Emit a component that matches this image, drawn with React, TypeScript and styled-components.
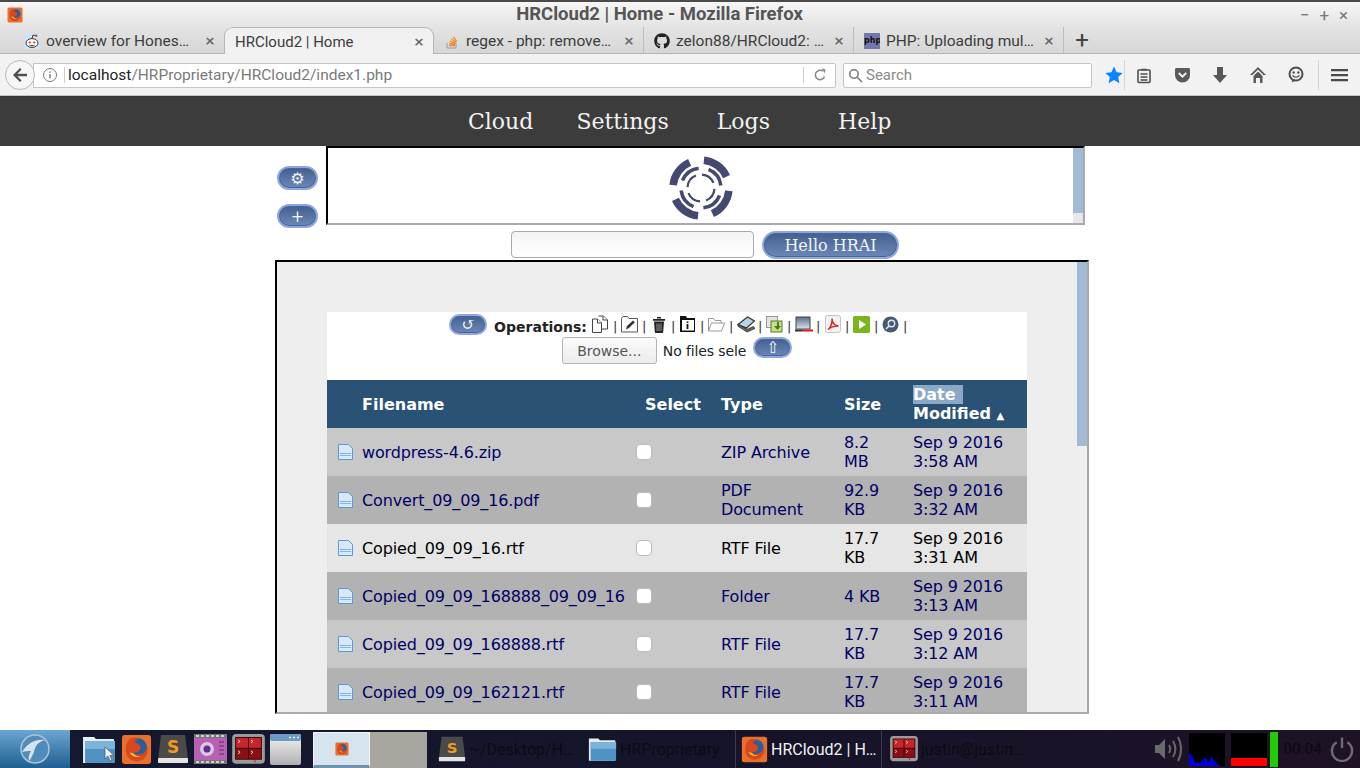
import React from "react";
import styled, { createGlobalStyle } from "styled-components";
import { FaGithub } from "react-icons/fa";

const Global = createGlobalStyle`
  html, body { margin: 0; padding: 0; background: #fff; overflow: hidden; }
  * { box-sizing: border-box; }
`;

const UI = `"Roboto", "Noto Sans", sans-serif`;
const BODY = `"DejaVu Sans", sans-serif`;
const SERIF = `"DejaVu Serif", "DejaVu Sans", serif`;

const Page = styled.div`
  width: 1360px; height: 768px; display: flex; flex-direction: column; overflow: hidden; background: #fff;
`;
const TitleBar = styled.div`
  height: 27px; flex: none; display: flex; align-items: center; padding: 0 12px 0 7px;
  border-top: 2px solid #4a4a4a;
  background: linear-gradient(#f6f6f6, #e4e4e4);
`;
const TitleText = styled.div`
  flex: 1; text-align: center; font: 700 18.5px ${UI}; color: #555; padding-right: 4px;
  position: relative; top: -1px;
`;
const WinControls = styled.div`
  display: flex; gap: 8px; color: #777; font: 400 17px/20px ${UI}; width: 48px; justify-content: space-between;
`;
const TabBar = styled.div`
  height: 27px; flex: none; display: flex; padding-left: 14px;
  background: linear-gradient(#e3e3e3, #d6d6d6);
  border-bottom: 1px solid #b5b5b5;
`;
const Tab = styled.div<{ $active?: boolean; $sep?: boolean }>`
  width: 210px; height: ${p => (p.$active ? "27px" : "26px")}; display: flex; align-items: center; padding: 1px 7px 0 10px; gap: 6px;
  font: 400 ${p => (p.$active ? 15 : 15.5)}px ${UI}; color: #3c3c3c; position: relative;
  ${p => p.$active && `background: linear-gradient(#f0f0f0, #f2f2f2); border: 1px solid #b8b8b8; border-bottom: none; border-radius: 9px 9px 0 0; z-index: 1;`}
  ${p => p.$sep && `border-right: 1px solid #bdbdbd;`}
`;
const TabLabel = styled.span`
  flex: 1; white-space: nowrap;
`;
const TabClose = styled.span`
  color: #666; font: 700 13px ${BODY}; width: 14px; text-align: center;
`;
const NewTab = styled.div`
  width: 36px; text-align: center; font: 400 24px/26px ${UI}; color: #444;
`;
const PhpIcon = styled.span`
  width: 16px; height: 16px; background: #7377ad; color: #111; font: 700 8px/16px ${BODY}; text-align: center; overflow: hidden; flex: none;
`;
const Toolbar = styled.div`
  height: 42px; flex: none; display: flex; align-items: center; padding: 1px 0 0 5px;
  background: #f2f2f2; border-bottom: 1px solid #c4c4c4; position: relative;
`;
const BackButton = styled.div`
  width: 30px; height: 30px; border-radius: 50%; background: #f6f6f6; border: 1px solid #b9b9b9; z-index: 1;
  display: flex; align-items: center; justify-content: center; flex: none;
`;
const UrlBar = styled.div`
  width: 803px; height: 25px; margin-left: -2px; background: #fff; border: 1px solid #c5c5c5; border-radius: 0 2px 2px 0;
  display: flex; align-items: center; padding-left: 8px; font: 400 15.5px ${UI}; color: #7a7a7a;
`;
const UrlSep = styled.span`
  width: 1px; height: 16px; background: #ccc; margin: 0 3px 0 6px;
`;
const UrlHost = styled.span` color: #222; `;
const UrlPath = styled.span` flex: 1; `;
const ReloadBox = styled.div`
  width: 32px; height: 16px; border-left: 1px solid #ccc; display: flex; align-items: center; justify-content: center;
`;
const SearchBox = styled.div`
  width: 249px; height: 25px; margin-left: 7px; background: #fff; border: 1px solid #c5c5c5; border-radius: 2px;
  display: flex; align-items: center; gap: 3px; padding-left: 4px; font: 400 15px ${UI}; color: #8a8a8a;
`;
const ToolIcons = styled.div`
  display: flex; align-items: center; margin-left: 11px; flex: 1;
`;
const ToolSlot = styled.div<{ $w: number; $sep?: boolean }>`
  width: ${p => p.$w}px; height: 30px; display: flex; align-items: center; justify-content: center;
  ${p => p.$sep && `border-right: 1px solid #d5d5d5;`}
`;
const SiteNav = styled.nav`
  height: 50px; flex: none; background: #3c3c3c; display: flex; align-items: center; padding: 0 0 0 468px;
  border-top: 1px solid #333;
`;
const NavItem = styled.a<{ $ml?: number }>`
  font: 400 22px ${SERIF}; color: #f2f2f2; margin-left: ${p => p.$ml ?? 0}px; white-space: nowrap;
`;
const Main = styled.main`
  flex: 1; min-height: 0; overflow: hidden; display: flex; flex-direction: column; background: #fff;
`;
const TopRow = styled.div`
  display: flex; align-items: flex-start; padding-left: 277px; gap: 8px; height: 85px; flex: none;
`;
const SideButtons = styled.div`
  width: 41px; padding-top: 20px; display: flex; flex-direction: column; gap: 14px;
`;
const Pill = styled.button<{ $w?: number; $h?: number }>`
  width: ${p => p.$w ?? 41}px; height: ${p => p.$h ?? 24}px; padding: 0; border-radius: 14px;
  border: 2px solid #8ea6e6; background: linear-gradient(#42608f, #6c88b6); color: #f4f4f4;
  font: 400 16px ${SERIF}; display: flex; align-items: center; justify-content: center; flex: none;
  box-shadow: inset 0 0 0 1px #4a6590;
`;
const LogoBox = styled.div`
  width: 759px; height: 79px; display: flex; border: 2px solid #aaa; border-top-color: #000; border-left-color: #000;
`;
const LogoArea = styled.div`
  flex: 1; display: flex; align-items: center; justify-content: center; background: #fff; padding-top: 5px;
`;
const ScrollTrack = styled.div<{ $bg: string }>`
  width: 10px; flex: none; background: ${p => p.$bg}; align-self: stretch;
`;
const ScrollThumb = styled.div<{ $h: number }>`
  height: ${p => p.$h}px; background: #a0bbd5;
`;
const SearchRow = styled.div`
  display: flex; align-items: flex-start; gap: 8px; padding-left: 511px; height: 29px; flex: none;
`;
const HelloInput = styled.input`
  width: 243px; height: 27px; border: 1px solid #aaa; border-radius: 4px; background: linear-gradient(#f4f4f4, #fff);
`;
const Panel = styled.section`
  margin-left: 275px; width: 814px; height: 454px; flex: none; display: flex; overflow: hidden; background: #eee;
  border: 2px solid #aaa; border-top-color: #000; border-left-color: #000;
`;
const PanelInner = styled.div`
  flex: 1; padding: 50px 50px 0; overflow: hidden;
`;
const Card = styled.div`
  width: 700px; background: #fff; font-family: ${BODY};
`;
const OpsArea = styled.div`
  height: 68px; padding-top: 2px; display: flex; flex-direction: column; align-items: center;
`;
const OpsRow = styled.div`
  display: flex; align-items: flex-start; height: 23px; margin-left: 6px;
`;
const OpsLabel = styled.b`
  font: 700 14px/26px ${BODY}; color: #222; margin: 0 5px 0 7px;
`;
const OpItem = styled.span`
  width: 29px; height: 23px; display: flex; align-items: flex-start; gap: 3px;
`;
const OpIconWrap = styled.span`
  width: 18px; height: 20px; display: flex; align-items: center; justify-content: center; flex: none;
`;
const Pipe = styled.span`
  font: 400 13px/26px ${BODY}; color: #333;
`;
const UploadRow = styled.div`
  display: flex; align-items: flex-start;
`;
const BrowseButton = styled.button`
  width: 95px; height: 27px; border: 1px solid #b4b4b4; border-radius: 3px; background: linear-gradient(#fbfbfb, #ececec);
  font: 400 14px ${BODY}; color: #555; padding: 0;
`;
const NoFiles = styled.span`
  font: 400 14px/28px ${BODY}; letter-spacing: -0.12px; color: #222; margin: 0 7px 0 6px; white-space: nowrap;
`;
const GRID = "35px 274px 85px 123px 69px 114px";
const HeadRow = styled.div`
  display: grid; grid-template-columns: ${GRID}; height: 48px; align-items: center; background: #2a5275;
  color: #fff; font: 700 16px/19px ${BODY};
`;
const HeadSelect = styled.span` padding-left: 9px; grid-column: 3; `;
const DateHead = styled.span` padding-top: 2px; `;
const Selected = styled.span` background: #8aa8c8; padding-right: 7px; display: inline-block; `;
const SortMark = styled.span` font-size: 10px; `;
const Row = styled.div<{ $bg: string; $hover?: boolean }>`
  display: grid; grid-template-columns: ${GRID}; height: 48px; align-items: center; background: ${p => p.$bg};
  color: ${p => (p.$hover ? "#000" : "#000066")}; font: 400 16px/19px ${BODY}; letter-spacing: -0.13px;
`;
const FileIconCell = styled.span` padding-left: 11px; display: flex; `;
const Cell = styled.span<{ $pr?: number }>` padding-right: ${p => p.$pr ?? 0}px; `;
const Check = styled.input`
  appearance: none; width: 16px; height: 16px; margin: 0; border: 1px solid #bbb; border-radius: 4px; background: #fff; display: block;
`;
const Taskbar = styled.footer`
  height: 38px; flex: none; display: flex; align-items: stretch;
  background: linear-gradient(90deg, #141a30, #15142a 50%, #1e1226);
  font: 400 16px ${UI}; color: #0b0b12;
`;
const StartButton = styled.div`
  width: 70px; flex: none; background: linear-gradient(#6aa6d2, #1f5f90); display: flex; align-items: center; justify-content: center;
`;
const Launchers = styled.div`
  display: flex; align-items: center; gap: 5px; padding-left: 12px; width: 243px; flex: none;
`;
const Pager = styled.div`
  display: flex; flex: none; padding-top: 2px; width: 125px;
`;
const Workspace = styled.div<{ $active?: boolean }>`
  width: 57px; height: 36px; display: flex; align-items: center; justify-content: center;
  background: ${p => (p.$active ? "#d6e4f0" : "#a9a59f")};
  ${p => p.$active && `border: 1px solid #f4f8fb; border-bottom: 3px solid #6f93ad;`}
`;
const TaskItem = styled.div<{ $w: number; $light?: boolean; $sep?: boolean; $pl?: number }>`
  width: ${p => p.$w}px; flex: none; display: flex; align-items: center; gap: 3px; white-space: nowrap;
  padding-left: ${p => p.$pl ?? 0}px;
  color: ${p => (p.$light ? "#f2f2f2" : "#0b0b12")};
  ${p => p.$sep && `border-right: 1px solid #3c3c48;`}
`;
const Tray = styled.div`
  margin-left: auto; display: flex; align-items: center; padding-right: 6px;
`;
const TrayGap = styled.span` width: 5px; `;
const Clock = styled.span`
  font: 400 15.5px ${UI}; color: #0a0a10; margin: 0 8px 0 5px;
`;
const FaviconBox = styled.span`
  width: 16px; height: 16px; flex: none; display: flex;
`;
const Graph = styled.svg<{ $ml?: number }>`
  margin-left: ${p => p.$ml ?? 0}px; flex: none;
`;

/* drawings */
const FirefoxIcon = ({ s = 16 }: { s?: number }) => (
  <svg width={s} height={s} viewBox="0 0 32 32">
    <rect x="1" y="1" width="30" height="30" rx="3" fill="#e8702a" />
    <circle cx="17" cy="14" r="10" fill="#2a5f9e" />
    <path d="M8 6c3-3 8-3 11-1-3 0-5 2-5 4 3 0 6 2 6 5 0 4-4 6-8 5 3 3 9 3 12 0 3-3 3-6 2-9 3 5 2 12-3 16-6 4-14 2-17-4C4 17 5 10 8 6z" fill="#d9481c" />
    <path d="M9 19c2 4 7 6 11 4-3 0-6-1-7-3z" fill="#f9c22e" />
  </svg>
);
const RedditIcon = () => (
  <svg width="16" height="16" viewBox="0 0 16 16">
    <rect width="16" height="16" fill="#cfe3f5" />
    <ellipse cx="8" cy="10" rx="6" ry="4.4" fill="#fff" stroke="#333" />
    <circle cx="5.8" cy="9.4" r="1.1" fill="#e8491d" />
    <circle cx="10.2" cy="9.4" r="1.1" fill="#e8491d" />
    <path d="M5.5 12c1.5 1 3.5 1 5 0M8 5.5L9 2l3 .8" stroke="#333" fill="none" />
    <circle cx="12.3" cy="2.8" r="1.2" fill="#e8491d" />
  </svg>
);
const StackIcon = () => (
  <svg width="16" height="16" viewBox="0 0 16 16" fill="none">
    <path d="M3 10v5h9v-5" stroke="#9a9a9a" />
    <path d="M5 12.5h6M5.2 10.4l5.8 1M6 8.2l5.400 2.400M7.400 6l4.600 3.600M9.400 4l3.400 4.600" stroke="#f08a24" strokeWidth="1.3" />
  </svg>
);
const InfoIcon = () => (
  <svg width="16" height="16" viewBox="0 0 16 16" fill="none" stroke="#777">
    <circle cx="8" cy="8" r="6.5" />
    <path d="M8 7v4.5M8 4.5v1.2" strokeWidth="1.4" />
  </svg>
);
const BackArrow = () => (
  <svg width="18" height="18" viewBox="0 0 18 18"><path d="M9 2L2 9l7 7 1.6-1.6L6.4 10.2H16V7.8H6.4l4.2-4.2z" fill="#4f4f4f" /></svg>
);
const Reload = () => (
  <svg width="14" height="14" viewBox="0 0 14 14" fill="none">
    <path d="M11.500 8.500A4.700 4.700 0 1 1 9.600 3" stroke="#8a8a8a" strokeWidth="1.6" />
    <path d="M8.500 0.500l4 .7-.7 4z" fill="#8a8a8a" />
  </svg>
);
const SearchGlass = () => (
  <svg width="15" height="15" viewBox="0 0 15 15" fill="none" stroke="#777" strokeWidth="1.5">
    <circle cx="6" cy="6" r="4.200" /><path d="M9 9l5 5" />
  </svg>
);
const Star = () => (
  <svg width="18" height="18" viewBox="0 0 18 18"><path d="M9 .6l2.600 5.600 6.100.7-4.500 4.200 1.200 6.100L9 13.900 3.600 17.200l1.200-6.100L.3 6.900l6.100-.7z" fill="#0a84ff" /></svg>
);
const ReadList = () => (
  <svg width="16" height="18" viewBox="0 0 16 18" fill="none" stroke="#4f4f4f" strokeWidth="1.6">
    <rect x="2" y="4" width="12" height="12.500" rx="1" />
    <path d="M5.500 3.500h5M4.500 8h7M4.500 11h7M4.500 14h7" />
  </svg>
);
const PocketIcon = () => (
  <svg width="17" height="16" viewBox="0 0 17 16">
    <path d="M1 2.500C1 1.500 1.700 1 2.500 1h12c.9 0 1.500.6 1.500 1.500V8a7.500 7.500 0 0 1-15 0z" fill="#5a5a5a" />
    <path d="M4.800 6l3.700 3.600L12.200 6" stroke="#f2f2f2" strokeWidth="2" fill="none" />
  </svg>
);
const DownIcon = () => (
  <svg width="16" height="18" viewBox="0 0 16 18"><path d="M5 1h6v8h4l-7 8-7-8h4z" fill="#585858" /></svg>
);
const HomeIcon = () => (
  <svg width="18" height="18" viewBox="0 0 18 18">
    <path d="M9 1L1 9h2.500l5.500-5.400L14.500 9H17z" fill="#585858" />
    <path d="M4.500 10L9 5.500l4.500 4.500v7H11v-5H7v5H4.500z" fill="#585858" />
  </svg>
);
const SmileIcon = () => (
  <svg width="18" height="18" viewBox="0 0 18 18" fill="none">
    <circle cx="9" cy="8" r="6.500" stroke="#4f4f4f" strokeWidth="2" />
    <circle cx="6.600" cy="6.500" r="1.200" fill="#4f4f4f" /><circle cx="11.400" cy="6.500" r="1.200" fill="#4f4f4f" />
    <path d="M5.500 9.500c2 2 5 2 7 0" stroke="#4f4f4f" strokeWidth="1.400" />
    <path d="M5 15.500l3-1.500" stroke="#4f4f4f" strokeWidth="1.500" />
  </svg>
);
const Burger = () => (
  <svg width="17" height="14" viewBox="0 0 17 14"><path d="M0 1h17v2.200H0zM0 6h17v2.200H0zM0 11h17v2.200H0z" fill="#4a4a4a" /></svg>
);

const polar = (r: number, deg: number, c: number) => {
  const a = ((deg - 90) * Math.PI) / 180;
  return `${(c + r * Math.cos(a)).toFixed(2)} ${(c + r * Math.sin(a)).toFixed(2)}`;
};
const arc = (r: number, a: number, b: number, c: number) => `M${polar(r, a, c)}A${r} ${r} 0 0 1 ${polar(r, b, c)}`;
const Logo = () => (
  <svg width="66" height="66" viewBox="0 0 66 66" fill="none" stroke="#454870">
    {[0, 90, 180, 270].map(q => (
      <g key={q}>
        <path d={arc(28, 6 + q, 66 + q, 33)} strokeWidth="7.500" />
        <path d={arc(20, 22 + q, 83 + q, 33)} strokeWidth="3.500" />
        <path d={arc(13.500, 4 + q, 68 + q, 33)} strokeWidth="2.200" />
      </g>
    ))}
  </svg>
);

const opIcons = [
  <svg key="a" width="17" height="18" viewBox="0 0 17 18" fill="#fff" stroke="#444"><path d="M6.500 1h5l4 4v9h-6" /><path d="M11 1v4h4.500" /><path d="M.5 4h5l4 4v9.500h-9z" /><path d="M5.500 4v4h4" /></svg>,
  <svg key="b" width="18" height="18" viewBox="0 0 18 18" fill="#fff" stroke="#555"><path d="M.5 3.500V17h16V3.500H8L6.500 1.500H2z" /><path d="M5 14.500l1-3.500 6-5.500 1.800 1.800-5.800 5.800z" fill="#333" stroke="none" /></svg>,
  <svg key="c" width="14" height="17" viewBox="0 0 14 17"><path d="M1 3h12v1.800H1zM5 1h4v1.500H5zM2 5.500h10l-.8 10.500a1 1 0 0 1-1 1H3.800a1 1 0 0 1-1-1z" fill="#222" /><path d="M5 7.500v7.500M7 7.500v7.500M9 7.500v7.500" stroke="#999" /></svg>,
  <svg key="d" width="17" height="18" viewBox="0 0 17 18"><path d="M1 1h6l1 2h8v14H1z" fill="#111" /><rect x="3" y="5" width="12" height="10.500" fill="#fff" /><path d="M8.500 6.500v1.500M8.500 9v5" stroke="#111" strokeWidth="1.800" /></svg>,
  <svg key="e" width="17" height="15" viewBox="0 0 17 15" fill="#fff" stroke="#999"><path d="M.5 14V1.500h5l1.500 2h6V6" /><path d="M.5 14l3-8h13l-3 8z" /></svg>,
  <svg key="f" width="18" height="17" viewBox="0 0 18 17"><path d="M1 8.500L10.500 1l7 4-8 7z" fill="#b6d4e8" stroke="#333" strokeWidth="1.200" /><path d="M1 8.500v1.800L10 16l8-3.500-1.500-2-6.500 2.800z" fill="#666" stroke="#222" strokeWidth=".7" /></svg>,
  <svg key="g" width="17" height="17" viewBox="0 0 17 17"><rect x=".5" y=".5" width="11" height="11" fill="#e4e4e4" stroke="#999" /><rect x="5" y="5" width="11" height="11" fill="#c6e08c" stroke="#557a2a" /><path d="M11 6v4H8l3.500 4 3.500-4h-2V6z" fill="#3f7f20" /></svg>,
  <svg key="h" width="18" height="17" viewBox="0 0 18 17"><defs><linearGradient id="drv" x1="0" y1="0" x2="0" y2="1"><stop offset="0" stopColor="#5a6f8c" /><stop offset="1" stopColor="#dbe4ee" /></linearGradient></defs><rect x="1" y="1" width="14" height="12" fill="url(#drv)" stroke="#444" /><path d="M0 14.500h7" stroke="#333" strokeWidth="2" /><path d="M7 14.500h11" stroke="#d81818" strokeWidth="2" /></svg>,
  <svg key="i" width="16" height="18" viewBox="0 0 16 18"><rect x=".5" y=".5" width="15" height="17" rx="2" fill="#f2f2f2" stroke="#c4c4c4" /><path d="M3 14.500c3-2 4.500-7 4-11 0 4 2.500 7.500 6.500 7.500-3.500 0-7.500 1-10.500 3.500z" fill="none" stroke="#d42a2a" strokeWidth="1.500" /></svg>,
  <svg key="j" width="17" height="17" viewBox="0 0 17 17"><rect width="17" height="17" rx="1.500" fill="#7ab51d" /><path d="M6 4l7 4.500L6 13z" fill="#fff" /></svg>,
  <svg key="k" width="17" height="17" viewBox="0 0 17 17" fill="none"><circle cx="8.500" cy="8.500" r="8" fill="#465a73" /><circle cx="9.500" cy="7.500" r="3.200" stroke="#dfe7ef" strokeWidth="1.400" /><path d="M7 10l-3 3" stroke="#dfe7ef" strokeWidth="1.600" /></svg>,
];

const FileIcon = () => (
  <svg width="15" height="16" viewBox="0 0 15 16">
    <path d="M.5.500h10l4 4v11H.5z" fill="#d6e8fa" stroke="#5b9ad8" />
    <path d="M2 9.500h11M2 11.500h11" stroke="#7db5ea" strokeWidth="1.200" />
  </svg>
);

const FolderIcon = ({ w = 34, cursor }: { w?: number; cursor?: boolean }) => (
  <svg width={w} height={w * 0.88} viewBox="0 0 34 30">
    <path d="M1 3h11l2 2h18v24H1z" fill="#e8eef2" />
    <rect x="3" y="7" width="30" height="22" rx="1" fill="#4f93c4" />
    <rect x="3" y="7" width="30" height="8" fill="#7cb3da" />
    {cursor && <path d="M23 13v12l3-3 2 5 2-1-2-4.500h4z" fill="#eee" stroke="#444" strokeWidth=".6" />}
  </svg>
);
const SublimeIcon = ({ w = 32 }: { w?: number }) => (
  <svg width={w} height={w} viewBox="0 0 32 32">
    <path d="M4 2h24l3 24H1z" fill="#4a4a4a" />
    <rect x="1" y="25" width="30" height="5" rx="1" fill="#e4e4e4" />
    <text x="16" y="20" textAnchor="middle" fontFamily='"DejaVu Sans", sans-serif' fontWeight="700" fontSize="17" fill="#f29a1f">S</text>
  </svg>
);
const VideoIcon = () => (
  <svg width="33" height="30" viewBox="0 0 33 30">
    <rect width="33" height="30" fill="#777" />
    <rect y="4" width="33" height="22" fill="#b760b5" />
    <path d="M2 2h3M7 2h3M12 2h3M17 2h3M22 2h3M27 2h3M2 28h3M7 28h3M12 28h3M17 28h3M22 28h3M27 28h3" stroke="#eee" strokeWidth="1.500" />
    <circle cx="13" cy="15" r="7" fill="#d8c8e4" />
    <circle cx="13" cy="15" r="3.500" fill="#5b2f8a" />
    <path d="M25 8h5M25 12h5M25 16h5M25 20h5" stroke="#8d4a8b" strokeWidth="2" />
  </svg>
);
const TerminalIcon = ({ w = 33 }: { w?: number }) => (
  <svg width={w} height={w * 0.9} viewBox="0 0 33 30">
    <rect width="33" height="30" rx="4" fill="#9b9b9b" />
    <rect x="3" y="3" width="27" height="23" fill="#3a0507" />
    <rect x="4" y="4" width="12" height="10" fill="#c8242c" />
    <rect x="17" y="4" width="12" height="10" fill="#c8242c" />
    <rect x="4" y="15" width="12" height="10" fill="#8d0f16" />
    <rect x="17" y="15" width="12" height="10" fill="#8d0f16" />
    <path d="M6 6l2 1.500-2 1.500M19 6l2 1.500-2 1.500M6 17l2 1.500-2 1.500M19 17l2 1.500-2 1.500" stroke="#f5d5d5" fill="none" />
    <circle cx="23" cy="27.500" r="1" fill="#e22" />
  </svg>
);
const WindowIcon = () => (
  <svg width="31" height="31" viewBox="0 0 31 31">
    <defs><linearGradient id="wg" x1="0" y1="0" x2="0" y2="1"><stop offset="0" stopColor="#f4f4f4" /><stop offset="1" stopColor="#b0b0b0" /></linearGradient></defs>
    <rect width="31" height="31" rx="2" fill="url(#wg)" />
    <rect width="31" height="7" rx="2" fill="#6a9ac6" />
    <path d="M19 3.500h2M23 3.500h2M27 3.500h2" stroke="#e4eef6" strokeWidth="1.500" />
  </svg>
);
const StartLogo = () => (
  <svg width="32" height="32" viewBox="0 0 32 32" fill="none">
    <circle cx="16" cy="16" r="14" fill="#4f8cba" stroke="#a9c4d8" strokeWidth="1.500" />
    <path d="M3 19c6-9 13-13 23-12-7 2-10 6-11 12-2 4-3 7-5 9-1-4 0-7 2-10-3 0-6 0-9 1z" fill="#d7e3ec" />
  </svg>
);
const Speaker = () => (
  <svg width="30" height="28" viewBox="0 0 30 28" fill="none" stroke="#666">
    <path d="M1 10h4l6-6v20l-6-6H1z" fill="#6a6a6a" stroke="none" />
    <path d="M15 10c1.500 2.500 1.500 5.500 0 8" strokeWidth="2" />
    <path d="M19 6c3 5 3 11 0 16" strokeWidth="2" />
    <path d="M24 2c4 7 4 17 0 24" strokeWidth="2" />
  </svg>
);
const CpuGraph = () => (
  <Graph width="36" height="33" viewBox="0 0 36 33">
    <rect width="36" height="33" fill="#000" />
    <path d="M0 33V20l1 2 1-2 1 6 1-3 1 5 2 2 2-1 2 2 2-4 1 1 1-5 1 3 2 0 1 4 2-3 1-4 2 3 1 2 2 1 2 3 1-1 1 4z" fill="#0000e0" />
  </Graph>
);
const MemGraph = () => (
  <Graph $ml={6} width="36" height="33" viewBox="0 0 36 33">
    <rect width="36" height="33" fill="#000" />
    <rect y="25" width="36" height="8" fill="#f00" />
  </Graph>
);
const BatteryBar = () => (
  <Graph $ml={3} width="8" height="35" viewBox="0 0 8 35">
    <rect width="8" height="35" fill="#22cc00" />
  </Graph>
);
const PowerIcon = () => (
  <svg width="24" height="26" viewBox="0 0 25 26" fill="none" stroke="#6d6d6d" strokeWidth="2.500">
    <path d="M7 6a10.500 10.500 0 1 0 11 0" />
    <path d="M12.500 1v11" />
  </svg>
);

const files = [
  { name: "wordpress-4.6.zip", type: "ZIP Archive", size: "8.2 MB", date: "Sep 9 2016 3:58 AM", bg: "#c8c8c8" },
  { name: "Convert_09_09_16.pdf", type: "PDF Document", size: "92.9 KB", date: "Sep 9 2016 3:32 AM", bg: "#b2b2b2" },
  { name: "Copied_09_09_16.rtf", type: "RTF File", size: "17.7 KB", date: "Sep 9 2016 3:31 AM", bg: "#e6e6e6", hover: true },
  { name: "Copied_09_09_168888_09_09_16", type: "Folder", size: "4 KB", date: "Sep 9 2016 3:13 AM", bg: "#b2b2b2" },
  { name: "Copied_09_09_168888.rtf", type: "RTF File", size: "17.7 KB", date: "Sep 9 2016 3:12 AM", bg: "#c8c8c8" },
  { name: "Copied_09_09_162121.rtf", type: "RTF File", size: "17.7 KB", date: "Sep 9 2016 3:11 AM", bg: "#b2b2b2" },
];

export default function App() {
  return (
    <Page>
      <Global />
      <TitleBar>
        <FirefoxIcon />
        <TitleText>HRCloud2 | Home - Mozilla Firefox</TitleText>
        <WinControls><span>−</span><span>+</span><span>×</span></WinControls>
      </TitleBar>
      <TabBar>
        <Tab><FaviconBox><RedditIcon /></FaviconBox><TabLabel>overview for Hones…</TabLabel><TabClose>×</TabClose></Tab>
        <Tab $active><TabLabel>HRCloud2 | Home</TabLabel><TabClose>×</TabClose></Tab>
        <Tab $sep><FaviconBox><StackIcon /></FaviconBox><TabLabel>regex - php: remove…</TabLabel><TabClose>×</TabClose></Tab>
        <Tab $sep><FaviconBox><FaGithub size={16} color="#222" /></FaviconBox><TabLabel>zelon88/HRCloud2: …</TabLabel><TabClose>×</TabClose></Tab>
        <Tab $sep><PhpIcon>php</PhpIcon><TabLabel>PHP: Uploading mul…</TabLabel><TabClose>×</TabClose></Tab>
        <NewTab>+</NewTab>
      </TabBar>
      <Toolbar>
        <BackButton><BackArrow /></BackButton>
        <UrlBar>
          <InfoIcon />
          <UrlSep />
          <UrlHost>localhost</UrlHost>
          <UrlPath>/HRProprietary/HRCloud2/index1.php</UrlPath>
          <ReloadBox><Reload /></ReloadBox>
        </UrlBar>
        <SearchBox><SearchGlass />Search</SearchBox>
        <ToolIcons>
          <ToolSlot $w={22} $sep><Star /></ToolSlot>
          <ToolSlot $w={38}><ReadList /></ToolSlot>
          <ToolSlot $w={38}><PocketIcon /></ToolSlot>
          <ToolSlot $w={38}><DownIcon /></ToolSlot>
          <ToolSlot $w={38}><HomeIcon /></ToolSlot>
          <ToolSlot $w={38}><SmileIcon /></ToolSlot>
          <ToolSlot $w={4} $sep />
          <ToolSlot $w={40}><Burger /></ToolSlot>
        </ToolIcons>
      </Toolbar>
      <SiteNav>
        <NavItem>Cloud</NavItem>
        <NavItem $ml={43}>Settings</NavItem>
        <NavItem $ml={48}>Logs</NavItem>
        <NavItem $ml={68}>Help</NavItem>
      </SiteNav>
      <Main>
        <TopRow>
          <SideButtons>
            <Pill>⚙</Pill>
            <Pill>+</Pill>
          </SideButtons>
          <LogoBox>
            <LogoArea><Logo /></LogoArea>
            <ScrollTrack $bg="#e8e8e8"><ScrollThumb $h={65} /></ScrollTrack>
          </LogoBox>
        </TopRow>
        <SearchRow>
          <HelloInput />
          <Pill $w={137} $h={28}>Hello HRAI</Pill>
        </SearchRow>
        <Panel>
          <PanelInner>
            <Card>
              <OpsArea>
                <OpsRow>
                  <Pill $w={38} $h={21}>↺</Pill>
                  <OpsLabel>Operations:</OpsLabel>
                  {opIcons.map((ic, i) => (
                    <OpItem key={i}><OpIconWrap>{ic}</OpIconWrap><Pipe>|</Pipe></OpItem>
                  ))}
                </OpsRow>
                <UploadRow>
                  <BrowseButton>Browse...</BrowseButton>
                  <NoFiles>No files sele</NoFiles>
                  <Pill $w={39} $h={21}>⇧</Pill>
                </UploadRow>
              </OpsArea>
              <HeadRow>
                <span />
                <span>Filename</span>
                <HeadSelect>Select</HeadSelect>
                <span>Type</span>
                <span>Size</span>
                <DateHead><Selected>Date</Selected><br />Modified <SortMark>▲</SortMark></DateHead>
              </HeadRow>
              {files.map(f => (
                <Row key={f.name} $bg={f.bg} $hover={f.hover}>
                  <FileIconCell><FileIcon /></FileIconCell>
                  <Cell>{f.name}</Cell>
                  <Cell><Check type="checkbox" /></Cell>
                  <Cell $pr={16}>{f.type}</Cell>
                  <Cell $pr={20}>{f.size}</Cell>
                  <Cell $pr={16}>{f.date}</Cell>
                </Row>
              ))}
            </Card>
          </PanelInner>
          <ScrollTrack $bg="#efefef"><ScrollThumb $h={184} /></ScrollTrack>
        </Panel>
      </Main>
      <Taskbar>
        <StartButton><StartLogo /></StartButton>
        <Launchers>
          <FolderIcon cursor />
          <FirefoxIcon s={31} />
          <SublimeIcon />
          <VideoIcon />
          <TerminalIcon />
          <WindowIcon />
        </Launchers>
        <Pager>
          <Workspace $active><FirefoxIcon s={14} /></Workspace>
          <Workspace />
        </Pager>
        <TaskItem $w={150}><SublimeIcon w={28} />~/Desktop/H…</TaskItem>
        <TaskItem $w={148} $sep><FolderIcon w={29} />HRProprietary</TaskItem>
        <TaskItem $w={146} $sep $light $pl={5}><FirefoxIcon s={27} />HRCloud2 | H…</TaskItem>
        <TaskItem $w={150} $pl={8}><TerminalIcon w={28} />justin@justin…</TaskItem>
        <Tray>
          <Speaker />
          <TrayGap />
          <CpuGraph />
          <MemGraph />
          <BatteryBar />
          <Clock>00:04</Clock>
          <PowerIcon />
        </Tray>
      </Taskbar>
    </Page>
  );
}
